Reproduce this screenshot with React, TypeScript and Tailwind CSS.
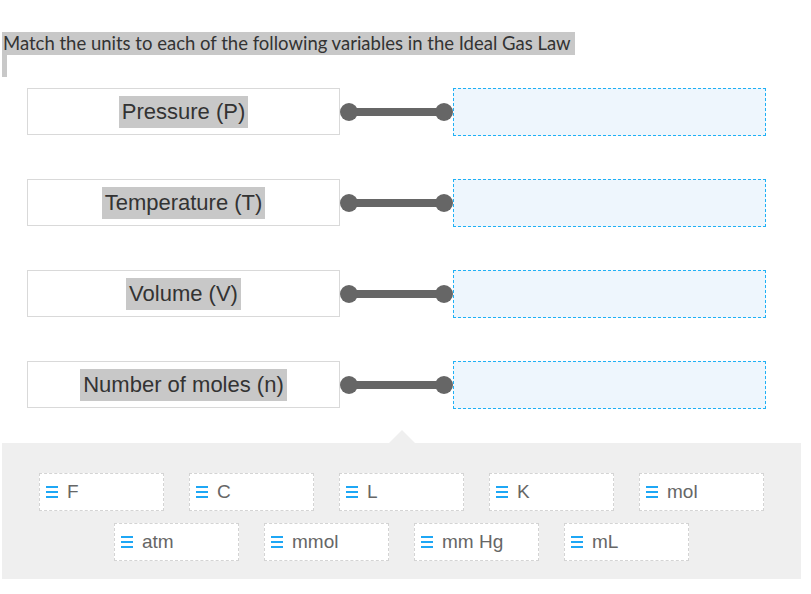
import React from "react";

const variables = ["Pressure (P)", "Temperature (T)", "Volume (V)", "Number of moles (n)"];
const row1 = ["F", "C", "L", "K", "mol"];
const row2 = ["atm", "mmol", "mm Hg", "mL"];

function Connector() {
  return (
    <svg width="113" height="20" viewBox="0 0 113 20" className="shrink-0">
      <line x1="9" y1="10" x2="104" y2="10" stroke="#666" strokeWidth="8" />
      <circle cx="9" cy="10" r="9" fill="#666" />
      <circle cx="104" cy="10" r="9" fill="#666" />
    </svg>
  );
}

function Grip() {
  return (
    <svg width="12" height="12" viewBox="0 0 12 12" className="shrink-0">
      <rect x="0" y="0" width="12" height="2" fill="#1ea7f5" />
      <rect x="0" y="5" width="12" height="2" fill="#1ea7f5" />
      <rect x="0" y="10" width="12" height="2" fill="#1ea7f5" />
    </svg>
  );
}

function Chip({ label }: { label: string }) {
  return (
    <div className="w-[125px] h-[38px] bg-white border border-dashed border-[#d4d4d4] flex items-center gap-[9px] pl-[6px]">
      <Grip />
      <span className="text-[19px] text-[#666]">{label}</span>
    </div>
  );
}

export default function App() {
  return (
    <div className="w-[811px] h-[594px] bg-white relative font-['Liberation_Sans',Arial,sans-serif]">
      {/* Question */}
      <div className="pt-[32px] pl-[2px]">
        <span className="block w-fit bg-[#c8c8c8] text-[#333] text-[18.5px] leading-[23px] pl-[1px] pr-[4px] font-['Lato','Open_Sans',sans-serif]">
          Match the units to each of the following variables in the Ideal Gas Law
        </span>
        <div className="w-[5px] h-[22px] bg-[#c8c8c8]" />
      </div>

      {/* Matching rows */}
      <div className="pl-[27px] pt-[11px] flex flex-col gap-[44px]">
        {variables.map((v) => (
          <div key={v} className="flex items-center h-[47px]">
            <div className="w-[313px] h-[47px] border border-[#d9d9d9] flex items-center justify-center">
              <span className="bg-[#c8c8c8] text-[#333] text-[22px] leading-[32px] px-[3px]">{v}</span>
            </div>
            <Connector />
            <div className="w-[313px] h-[48px] border border-dashed border-[#1fb0f5] bg-[#eef6fd]" />
          </div>
        ))}
      </div>

      {/* Answer bank */}
      <div className="relative mt-[35px] ml-[2px] w-[799px] h-[136px] bg-[#efefef] pt-[30px] flex flex-col items-center gap-[12px]">
        <div className="absolute left-[387px] top-[-13px] w-0 h-0 border-l-[13px] border-r-[13px] border-b-[13px] border-l-transparent border-r-transparent border-b-[#efefef]" />
        <div className="flex gap-[25px]">
          {row1.map((c) => (
            <Chip key={c} label={c} />
          ))}
        </div>
        <div className="flex gap-[25px]">
          {row2.map((c) => (
            <Chip key={c} label={c} />
          ))}
        </div>
      </div>
    </div>
  );
}
